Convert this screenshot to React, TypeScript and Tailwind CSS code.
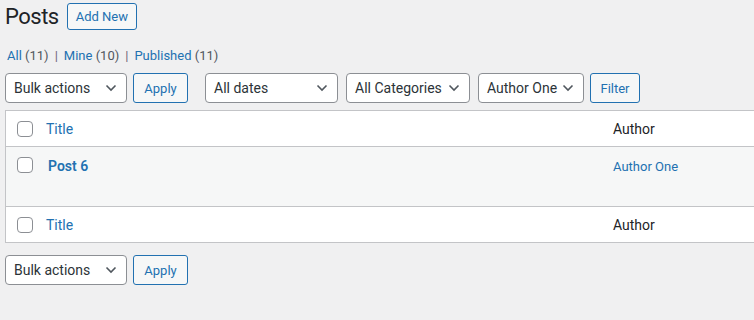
import React from "react";

const Chevron: React.FC = () => (
  <svg width="12" height="8" viewBox="0 0 12 8" className="shrink-0">
    <polyline
      points="1.5,1.5 6,6 10.5,1.5"
      fill="none"
      stroke="#50575e"
      strokeWidth="1.6"
    />
  </svg>
);

const Select: React.FC<{ label: string; width: string }> = ({ label, width }) => (
  <div
    className={`${width} h-[30px] flex items-center justify-between pl-[8px] pr-[9px] bg-white border border-[#8c8f94] rounded-[4px] text-[14px] text-[#2c3338] whitespace-nowrap`}
  >
    <span className="pt-[1px]">{label}</span>
    <Chevron />
  </div>
);

const Button: React.FC<{ label: string; width: string }> = ({ label, width }) => (
  <div
    className={`${width} h-[30px] flex items-center justify-center bg-[#f6f7f7] border border-[#2271b1] rounded-[3px] text-[13px] text-[#2271b1]`}
  >
    <span className="pt-[1px]">{label}</span>
  </div>
);

const Checkbox: React.FC = () => (
  <div className="w-[16px] h-[16px] bg-white border border-[#8c8f94] rounded-[4px] shrink-0" />
);

const App: React.FC = () => {
  return (
    <div
      className="w-[754px] h-[320px] overflow-hidden bg-[#f0f0f1] text-[#3c434a]"
      style={{ fontFamily: 'Roboto, "Noto Sans", sans-serif' }}
    >
      <div className="pl-[5px]">
        <div className="flex items-center h-[33px]">
          <h1 className="text-[22px] tracking-[-0.5px] text-[#1d2327] leading-none">
            Posts
          </h1>
          <div className="ml-[8px] h-[27px] px-[8px] flex items-center bg-[#f6f7f7] border border-[#2271b1] rounded-[3px] text-[13px] text-[#2271b1]">
            Add New
          </div>
        </div>

        <div className="mt-[13px] pl-[2px] h-[20px] flex items-center text-[13px]">
          <span className="text-[#2271b1]">
            All <span className="text-[#50575e]">(11)</span>
          </span>
          <span className="mx-[6px] text-[#6f6377]">|</span>
          <span className="text-[#2271b1]">
            Mine <span className="text-[#50575e]">(10)</span>
          </span>
          <span className="mx-[6px] text-[#6f6377]">|</span>
          <span className="text-[#2271b1]">
            Published <span className="text-[#50575e]">(11)</span>
          </span>
        </div>

        <div className="mt-[7px] flex items-center">
          <Select label="Bulk actions" width="w-[122px]" />
          <div className="ml-[6px]">
            <Button label="Apply" width="w-[55px]" />
          </div>
          <div className="ml-[17px]">
            <Select label="All dates" width="w-[133px]" />
          </div>
          <div className="ml-[8px]">
            <Select label="All Categories" width="w-[124px]" />
          </div>
          <div className="ml-[8px]">
            <Select label="Author One" width="w-[106px]" />
          </div>
          <div className="ml-[6px]">
            <Button label="Filter" width="w-[50px]" />
          </div>
        </div>

        <div className="mt-[7px] w-[800px] border border-[#c3c4c7] bg-white text-[14px]">
          <div className="h-[36px] flex items-center border-b border-[#c3c4c7]">
            <div className="w-[40px] pl-[11px]">
              <Checkbox />
            </div>
            <div className="w-[567px] pt-[2px] text-[#2271b1]">Title</div>
            <div className="pt-[2px] text-[#1d2327]">Author</div>
          </div>
          <div className="h-[60px] flex items-start bg-[#f6f7f7] border-b border-[#c3c4c7]">
            <div className="w-[40px] pl-[11px] pt-[10px]">
              <Checkbox />
            </div>
            <div className="w-[567px] pl-[2px] pt-[9px] text-[#2271b1] font-semibold">
              Post 6
            </div>
            <div className="pt-[10px] text-[13px] text-[#2271b1]">Author One</div>
          </div>
          <div className="h-[35px] flex items-center">
            <div className="w-[40px] pl-[11px]">
              <Checkbox />
            </div>
            <div className="w-[567px] pt-[2px] text-[#2271b1]">Title</div>
            <div className="pt-[2px] text-[#1d2327]">Author</div>
          </div>
        </div>

        <div className="mt-[12px] flex items-center">
          <Select label="Bulk actions" width="w-[122px]" />
          <div className="ml-[6px]">
            <Button label="Apply" width="w-[55px]" />
          </div>
        </div>
      </div>
    </div>
  );
};

export default App;
